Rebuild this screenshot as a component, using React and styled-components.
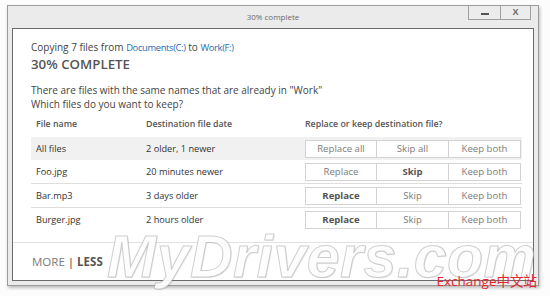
import React from 'react';
import styled, { createGlobalStyle } from 'styled-components';

const GlobalStyle = createGlobalStyle`
  html, body {
    margin: 0;
    padding: 0;
    background: #fcfcfc;
  }
  body {
    font-family: "Open Sans", "Noto Sans", sans-serif;
  }
`;

const Page = styled.div`
  position: relative;
  width: 550px;
  height: 296px;
  padding: 5px 0 0 7px;
  box-sizing: border-box;
  overflow: hidden;
`;

const Window = styled.div`
  width: 532px;
  height: 281px;
  box-sizing: border-box;
  border: 1px solid #9c9c9c;
  background: #ebebeb;
  padding: 0 4px 4px 4px;
  display: flex;
  flex-direction: column;
  box-shadow: 1px 2px 3px rgba(0, 0, 0, 0.25);
`;

const TitleBar = styled.div`
  height: 22px;
  display: grid;
  grid-template-columns: 1fr auto 1fr;
  align-items: start;
`;

const Title = styled.div`
  grid-column: 2;
  font-size: 8px;
  color: #6a6a6a;
  line-height: 22px;
`;

const Controls = styled.div`
  grid-column: 3;
  justify-self: end;
  display: flex;
  margin-right: 3px;
`;

const ControlButton = styled.div`
  width: ${p => p.w}px;
  height: 13px;
  border: 1px solid #a0a0a0;
  border-top: none;
  background: #ececec;
  display: flex;
  align-items: center;
  justify-content: center;
  & + & {
    border-left: none;
  }
`;

const MinGlyph = styled.div`
  width: 8px;
  height: 2px;
  background: #555;
  margin-top: 3px;
`;

const CloseGlyph = styled.div`
  font-family: "Liberation Sans", sans-serif;
  font-size: 9px;
  font-weight: bold;
  color: #666;
  line-height: 1;
`;

const Panel = styled.div`
  flex: 1;
  background: #fff;
  border: 1px solid #6b6b6b;
  display: flex;
  flex-direction: column;
`;

const Body = styled.div`
  padding: 11px 11px 0 18px;
`;

const Line = styled.div`
  font-size: 10px;
  line-height: 14px;
  color: #444;
  white-space: nowrap;
`;

const Link = styled.span`
  color: #2a6db0;
  font-size: 9.4px;
  letter-spacing: -0.35px;
`;

const Heading = styled.div`
  font-size: 13.3px;
  font-weight: 600;
  line-height: 18px;
  color: #555;
  margin-bottom: 10px;
`;

const Table = styled.div`
  margin-top: 3px;
`;

const Row = styled.div`
  display: grid;
  grid-template-columns: 110px 159px 216px;
  align-items: center;
  box-sizing: content-box;
  padding-left: 5px;
  padding-bottom: ${p => (p.header ? 3 : 0)}px;
  height: ${p => (p.header ? 20 : 23)}px;
  background: ${p => (p.shaded ? '#f1f1f1' : 'transparent')};
  border-top: ${p => (p.divided ? '1px solid #dedede' : 'none')};
  font-size: ${p => (p.header ? 8.8 : 9.2)}px;
  color: ${p => (p.header ? '#555' : '#333')};
  font-weight: ${p => (p.header ? 600 : 400)};
`;

const Cell = styled.div`
  white-space: nowrap;
`;

const ButtonGroup = styled.div`
  display: flex;
  height: 18px;
`;

const Choice = styled.div`
  width: 72px;
  box-sizing: border-box;
  border: 1px solid #d2d2d2;
  background: #fff;
  display: flex;
  align-items: center;
  justify-content: center;
  font-size: 9.6px;
  color: ${p => (p.strong ? '#555' : '#7c7c7c')};
  font-weight: ${p => (p.strong ? 700 : 400)};
  & + & {
    border-left: none;
  }
`;

const Footer = styled.div`
  margin-top: auto;
  height: 37px;
  border-top: 1px solid #e2e2e2;
  display: flex;
  align-items: center;
  padding-left: 19px;
  font-size: 11.5px;
  color: #7a7a7a;
`;

const Bar = styled.span`
  color: #333;
  margin: 0 3px;
`;

const Less = styled.span`
  font-weight: 700;
  color: #555;
`;

const Watermark = styled.div`
  position: absolute;
  left: 107px;
  top: 223px;
  font-family: "Liberation Sans", sans-serif;
  font-size: 59px;
  font-weight: bold;
  font-style: italic;
  letter-spacing: 0.5px;
  color: rgba(255, 255, 255, 0.9);
  -webkit-text-stroke: 1px rgba(160, 160, 160, 0.5);
  text-shadow: 1px 1px 1px rgba(0, 0, 0, 0.08);
  pointer-events: none;
  white-space: nowrap;
`;

const Credit = styled.div`
  position: absolute;
  right: 13px;
  top: 273px;
  font-family: "Open Sans", "Noto Sans CJK SC", sans-serif;
  font-size: 13.5px;
  line-height: 16px;
  color: #e3262c;
  white-space: nowrap;
`;

const rows = [
  { name: 'Foo.jpg', date: '20 minutes newer', strong: 'skip' },
  { name: 'Bar.mp3', date: '3 days older', strong: 'replace' },
  { name: 'Burger.jpg', date: '2 hours older', strong: 'replace' },
];

export default function App() {
  return (
    <>
      <GlobalStyle />
      <Page>
        <Window>
          <TitleBar>
            <Title>30% complete</Title>
            <Controls>
              <ControlButton w={31}><MinGlyph /></ControlButton>
              <ControlButton w={29}><CloseGlyph>X</CloseGlyph></ControlButton>
            </Controls>
          </TitleBar>
          <Panel>
            <Body>
              <Line>
                Copying 7 files from <Link>Documents(C:)</Link> to <Link>Work(F:)</Link>
              </Line>
              <Heading>30% COMPLETE</Heading>
              <Line>There are files with the same names that are already in "Work"</Line>
              <Line>Which files do you want to keep?</Line>
              <Table>
                <Row header>
                  <Cell>File name</Cell>
                  <Cell>Destination file date</Cell>
                  <Cell>Replace or keep destination file?</Cell>
                </Row>
                <Row shaded>
                  <Cell>All files</Cell>
                  <Cell>2 older, 1 newer</Cell>
                  <ButtonGroup>
                    <Choice>Replace all</Choice>
                    <Choice>Skip all</Choice>
                    <Choice>Keep both</Choice>
                  </ButtonGroup>
                </Row>
                {rows.map((r, i) => (
                  <Row key={r.name} divided={i > 0}>
                    <Cell>{r.name}</Cell>
                    <Cell>{r.date}</Cell>
                    <ButtonGroup>
                      <Choice strong={r.strong === 'replace'}>Replace</Choice>
                      <Choice strong={r.strong === 'skip'}>Skip</Choice>
                      <Choice>Keep both</Choice>
                    </ButtonGroup>
                  </Row>
                ))}
              </Table>
            </Body>
            <Footer>
              MORE<Bar>|</Bar><Less>LESS</Less>
            </Footer>
          </Panel>
        </Window>
        <Watermark>MyDrivers.com</Watermark>
        <Credit>Exchange中文站</Credit>
      </Page>
    </>
  );
}
